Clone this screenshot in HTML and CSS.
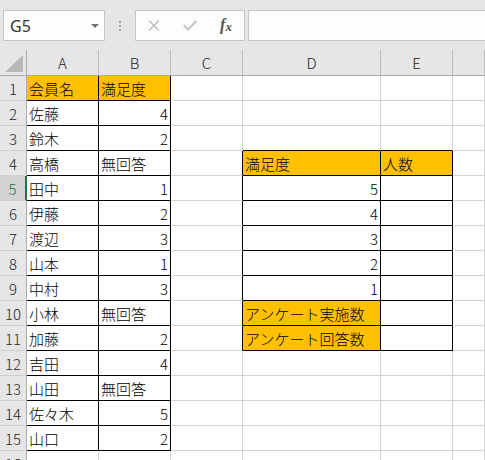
FILE: index.html
```html
<!DOCTYPE html>
<html lang="ja">
<head>
<meta charset="utf-8">
<title>Excel</title>
<link rel="stylesheet" href="styles.css">
</head>
<body>
<div class="toolbar">
  <div class="namebox">
    <span class="ref">G5</span>
    <svg class="caret" width="8" height="4" viewBox="0 0 8 4"><path d="M0 0H8L4 4Z" fill="#737373"/></svg>
  </div>
  <div class="grip">
    <svg width="2" height="10" viewBox="0 0 2 10"><rect x="0" y="0" width="2" height="2" fill="#a6a6a6"/><rect x="0" y="4" width="2" height="2" fill="#a6a6a6"/><rect x="0" y="8" width="2" height="2" fill="#a6a6a6"/></svg>
  </div>
  <div class="fbtns">
    <span class="fbtn"><svg width="12" height="11" viewBox="0 0 12 11"><path d="M1 0.5L11 10.5M11 0.5L1 10.5" stroke="#bdbdbd" stroke-width="1.4" fill="none"/></svg></span>
    <span class="fbtn"><svg width="14" height="11" viewBox="0 0 14 11"><path d="M0.8 5.2L5 9.6L13.3 1" stroke="#c2c2c2" stroke-width="2" fill="none"/></svg></span>
    <span class="fbtn"><span class="fx">f<span class="fx-x">x</span></span></span>
  </div>
  <div class="fbar"></div>
</div>
<div class="sheet">
  <div class="corner"><svg width="18" height="17" viewBox="0 0 18 17"><path d="M18 0V17H0Z" fill="#b8b8b8"/></svg></div>
  <div class="ch">A</div><div class="ch">B</div><div class="ch">C</div><div class="ch">D</div><div class="ch">E</div><div class="ch"></div>

  <div class="rh">1</div><div class="c b o">会員名</div><div class="c b o">満足度</div><div class="c"></div><div class="c"></div><div class="c"></div><div class="c"></div>
  <div class="rh">2</div><div class="c b">佐藤</div><div class="c b n">4</div><div class="c"></div><div class="c"></div><div class="c"></div><div class="c"></div>
  <div class="rh">3</div><div class="c b">鈴木</div><div class="c b n">2</div><div class="c"></div><div class="c bb"></div><div class="c bb"></div><div class="c"></div>
  <div class="rh">4</div><div class="c b">高橋</div><div class="c b">無回答</div><div class="c br"></div><div class="c b o">満足度</div><div class="c b o">人数</div><div class="c"></div>
  <div class="rh sel">5</div><div class="c b">田中</div><div class="c b n">1</div><div class="c br"></div><div class="c b n">5</div><div class="c b"></div><div class="c"></div>
  <div class="rh">6</div><div class="c b">伊藤</div><div class="c b n">2</div><div class="c br"></div><div class="c b n">4</div><div class="c b"></div><div class="c"></div>
  <div class="rh">7</div><div class="c b">渡辺</div><div class="c b n">3</div><div class="c br"></div><div class="c b n">3</div><div class="c b"></div><div class="c"></div>
  <div class="rh">8</div><div class="c b">山本</div><div class="c b n">1</div><div class="c br"></div><div class="c b n">2</div><div class="c b"></div><div class="c"></div>
  <div class="rh">9</div><div class="c b">中村</div><div class="c b n">3</div><div class="c br"></div><div class="c b n">1</div><div class="c b"></div><div class="c"></div>
  <div class="rh">10</div><div class="c b">小林</div><div class="c b">無回答</div><div class="c br"></div><div class="c b o">アンケート実施数</div><div class="c b"></div><div class="c"></div>
  <div class="rh">11</div><div class="c b">加藤</div><div class="c b n">2</div><div class="c br"></div><div class="c b o">アンケート回答数</div><div class="c b"></div><div class="c"></div>
  <div class="rh">12</div><div class="c b">吉田</div><div class="c b n">4</div><div class="c"></div><div class="c"></div><div class="c"></div><div class="c"></div>
  <div class="rh">13</div><div class="c b">山田</div><div class="c b">無回答</div><div class="c"></div><div class="c"></div><div class="c"></div><div class="c"></div>
  <div class="rh">14</div><div class="c b">佐々木</div><div class="c b n">5</div><div class="c"></div><div class="c"></div><div class="c"></div><div class="c"></div>
  <div class="rh">15</div><div class="c b">山口</div><div class="c b n">2</div><div class="c"></div><div class="c"></div><div class="c"></div><div class="c"></div>
  <div class="rh">16</div><div class="c"></div><div class="c"></div><div class="c"></div><div class="c"></div><div class="c"></div><div class="c"></div>
</div>
</body>
</html>
```
FILE: styles.css
```css
* {
  box-sizing: border-box;
  margin: 0;
  padding: 0;
}

html,
body {
  width: 485px;
  height: 460px;
  overflow: hidden;
  background: #ffffff;
}

body {
  font-family: "Noto Sans CJK JP", "Noto Sans", sans-serif;
  font-size: 15px;
  font-weight: 300;
  color: #000000;
}

/* ---------- toolbar ---------- */
.toolbar {
  height: 50px;
  background: #e6e6e6;
  display: flex;
  align-items: flex-start;
  padding: 10px 0 0 3px;
  overflow: hidden;
}

.namebox {
  width: 102px;
  height: 31px;
  flex: none;
  background: #fdfdfd;
  border: 1px solid #c6c6c6;
  display: flex;
  align-items: center;
  justify-content: space-between;
  padding: 0 5px 0 6px;
}

.ref {
  font-family: "Noto Sans", sans-serif;
  font-size: 16px;
  font-weight: 400;
  color: #333333;
  line-height: 1;
}

.caret {
  display: block;
  margin-top: 1px;
}

.grip {
  width: 30px;
  height: 31px;
  flex: none;
  display: flex;
  align-items: center;
  justify-content: center;
}

.grip svg {
  display: block;
}

.fbtns {
  width: 110px;
  height: 31px;
  flex: none;
  background: #fdfdfd;
  border: 1px solid #c6c6c6;
  display: flex;
}

.fbtn {
  width: 36px;
  height: 29px;
  display: flex;
  align-items: center;
  justify-content: center;
}

.fbtn svg {
  display: block;
}

.fx {
  font-family: "Liberation Serif", serif;
  font-style: italic;
  font-weight: 700;
  font-size: 16px;
  color: #555555;
  line-height: 1;
  margin-top: -2px;
}

.fx-x {
  font-size: 13px;
  position: relative;
  top: 1px;
}

.fbar {
  flex: 1;
  height: 31px;
  margin-left: 3px;
  margin-right: -10px;
  background: #fdfdfd;
  border: 1px solid #c6c6c6;
}

/* ---------- sheet ---------- */
.sheet {
  display: grid;
  grid-template-columns: 27px 72px 72px 72px 138px 72px 1fr;
  grid-template-rows: 26px repeat(16, 25px);
}

.corner {
  background: #e6e6e6;
  border-right: 1px solid #ababab;
  border-bottom: 1px solid #ababab;
  display: flex;
  align-items: flex-end;
  justify-content: flex-end;
  padding: 0 3px 3px 0;
}

.corner svg {
  display: block;
}

.ch {
  background: #e6e6e6;
  border-right: 1px solid #bcbcbc;
  border-bottom: 1px solid #ababab;
  display: flex;
  align-items: center;
  justify-content: center;
  color: #222222;
}

.rh {
  background: #e6e6e6;
  border-right: 1px solid #ababab;
  border-bottom: 1px solid #cfcfcf;
  display: flex;
  align-items: center;
  justify-content: center;
  color: #262626;
}

.rh.sel {
  background: #d2d2d2;
  color: #217346;
  border-right: 2px solid #217346;
}

.c {
  border-right: 1px solid #d4d4d4;
  border-bottom: 1px solid #d4d4d4;
  display: flex;
  align-items: center;
  padding: 0 2px;
  white-space: nowrap;
  overflow: hidden;
}

.n {
  justify-content: flex-end;
}

.o {
  background: #ffc000;
}

.b {
  border-right-color: #000000;
  border-bottom-color: #000000;
}

.br {
  border-right-color: #000000;
}

.bb {
  border-bottom-color: #000000;
}
```
